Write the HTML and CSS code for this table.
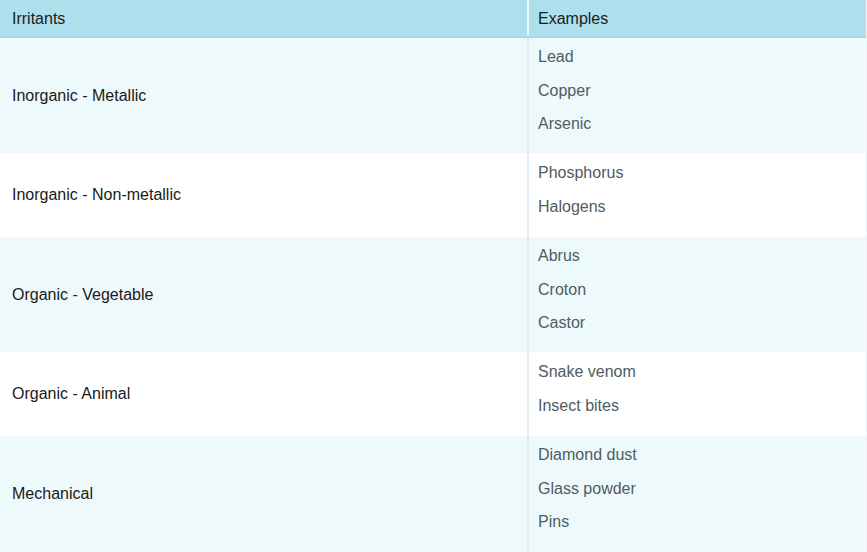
FILE: index.html
```html
<!DOCTYPE html>
<html>
<head>
<meta charset="utf-8">
<link rel="stylesheet" href="styles.css">
</head>
<body>
<div class="table">
  <div class="row head">
    <div class="cell name">Irritants</div>
    <div class="cell ex">Examples</div>
  </div>
  <div class="row alt three">
    <div class="cell name">Inorganic - Metallic</div>
    <div class="cell ex"><span>Lead</span><span>Copper</span><span>Arsenic</span></div>
  </div>
  <div class="row two">
    <div class="cell name">Inorganic - Non-metallic</div>
    <div class="cell ex"><span>Phosphorus</span><span>Halogens</span></div>
  </div>
  <div class="row alt three">
    <div class="cell name">Organic - Vegetable</div>
    <div class="cell ex"><span>Abrus</span><span>Croton</span><span>Castor</span></div>
  </div>
  <div class="row two">
    <div class="cell name">Organic - Animal</div>
    <div class="cell ex"><span>Snake venom</span><span>Insect bites</span></div>
  </div>
  <div class="row alt three">
    <div class="cell name">Mechanical</div>
    <div class="cell ex"><span>Diamond dust</span><span>Glass powder</span><span>Pins</span></div>
  </div>
</div>
</body>
</html>
```
FILE: styles.css
```css
html, body {
  margin: 0;
  padding: 0;
  background: #ffffff;
}
body {
  font-family: "Liberation Sans", Arial, sans-serif;
  font-size: 16px;
  width: 867px;
  height: 552px;
  overflow: hidden;
}
.table {
  display: flex;
  flex-direction: column;
  width: 866px;
  border-right: 1px solid #eef3f5;
}
.row {
  display: grid;
  grid-template-columns: 527px 1fr;
}
.row.head {
  height: 36px;
  background: #ade0ec;
  border-bottom: 2px solid #a5dbe6;
}
.row.alt { background: #eef9fc; }
.row.three { height: 115px; }
.row.two { height: 84px; }
.row:last-child { height: 116px; }
.cell.name {
  display: flex;
  align-items: center;
  padding-left: 12px;
  color: #1a1a1a;
  line-height: 18px;
}
.cell.ex {
  border-left: 2px solid #e3edf0;
  padding: 10px 0 0 9px;
  display: flex;
  flex-direction: column;
  gap: 15.5px;
  color: #4f5c61;
  line-height: 18px;
}
.row.two .cell.ex { padding-top: 11px; }
.head .cell.name { color: #1c1c1c; padding-top: 1px; }
.head .cell.ex {
  border-left-color: #eaf6fa;
  padding: 1px 0 0 9px;
  justify-content: center;
  color: #1c1c1c;
}
```
